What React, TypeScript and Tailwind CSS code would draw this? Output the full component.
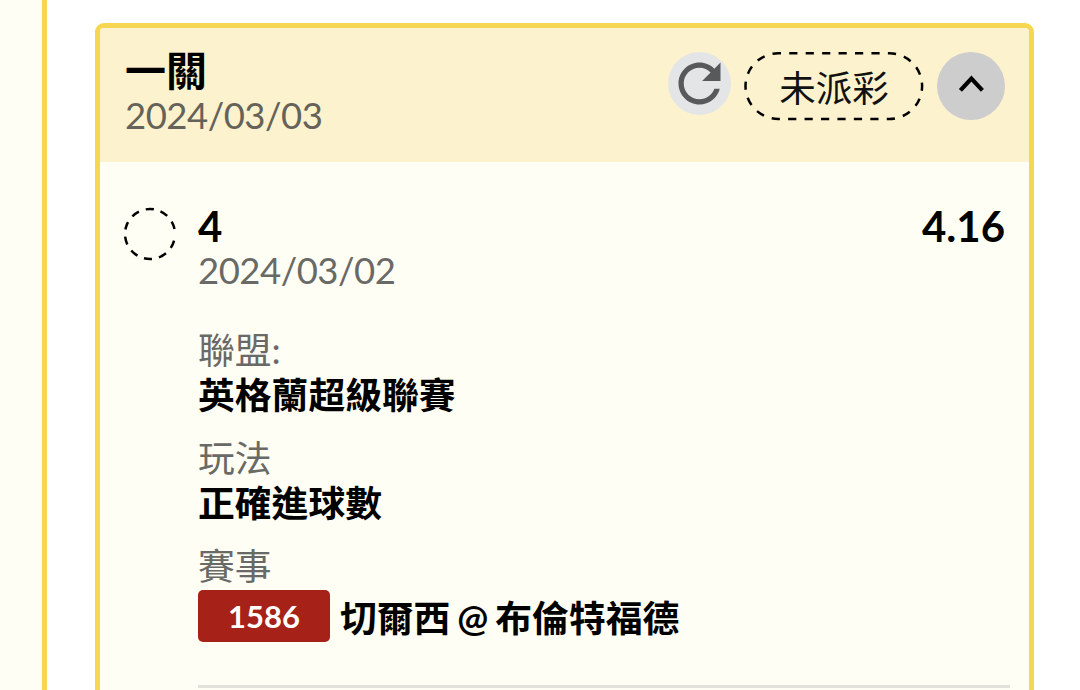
interface DetailItem {
  label: string
  value: string
}

const details: DetailItem[] = [
  { label: '聯盟:', value: '英格蘭超級聯賽' },
  { label: '玩法', value: '正確進球數' },
]

const RefreshButton = () => (
  <button type="button" aria-label="refresh" className="h-[63px] w-[63px] shrink-0 rounded-full bg-[#e4e5e7]">
    <svg viewBox="0 0 24 24" className="block h-[63px] w-[63px]" fill="#58595b">
      <path d="M17.65 6.35C16.2 4.9 14.21 4 12 4c-4.42 0-7.99 3.58-7.99 8s3.57 8 7.99 8c3.73 0 6.84-2.55 7.73-6h-2.08c-.82 2.33-3.04 4-5.65 4-3.31 0-6-2.69-6-6s2.69-6 6-6c1.66 0 3.14.69 4.22 1.78L13 11h7V4l-2.35 2.35z" />
    </svg>
  </button>
)

const StatusPill = ({ text }: { text: string }) => (
  <div className="relative ml-[13px] flex h-[68px] w-[180px] items-center justify-center text-[36.5px] leading-none text-[#111]">
    <svg viewBox="0 0 180 68" className="absolute inset-0 h-full w-full overflow-visible" fill="none" stroke="#000">
      <rect
        x="1.5"
        y="1.3"
        width="176.6"
        height="65.6"
        rx="32.8"
        strokeWidth="2.5"
        strokeDasharray="8.2 8.24"
        strokeDashoffset="5.5"
      />
    </svg>
    <span className="pt-[4px]">{text}</span>
  </div>
)

const CollapseButton = () => (
  <button type="button" aria-label="collapse" className="ml-[13px] h-[68px] w-[68px] shrink-0 rounded-full bg-[#cdcdcd]">
    <svg viewBox="0 0 68 68" className="block h-full w-full" fill="none" stroke="#000" strokeWidth="4.2">
      <path d="M23.4 38.4L34.4 26.6L45.4 38.4" />
    </svg>
  </button>
)

const PendingCircle = () => (
  <svg viewBox="0 0 54 54" className="mt-[18px] h-[54px] w-[54px] shrink-0" fill="none" stroke="#000">
    <circle
      cx="27"
      cy="27"
      r="25"
      strokeWidth="2.5"
      transform="rotate(15.5 27 27)"
      strokeDasharray="8 7.15 8 7.15 8 7.15 8 7.15 8 7.15 8 7.15 8 7.15 8 7.15 8 7.15 8 20"
    />
  </svg>
)

const App = () => {
  return (
    <div className="flex h-[690px] w-[1080px] overflow-hidden bg-white font-['Lato','Noto_Sans_CJK_TC',sans-serif] text-black">
      <div className="w-[47px] shrink-0 border-r-[5px] border-[#f7d751] bg-[#fffef5]" />

      <div className="ml-12 mt-[23px] h-[720px] w-[939px] shrink-0 overflow-hidden rounded-[9px] border-[5px] border-[#f7d751] bg-[#fffef5]">
        <header className="flex h-[134px] justify-between bg-[#fdf2ce] pl-[25px] pr-6 pt-6">
          <div className="-mt-[2px]">
            <h2 className="h-[43px] text-[41px] leading-[42px] font-bold">一關</h2>
            <p className="h-[44px] text-[36.5px] leading-[44px] tracking-[-0.5px] text-[#65625a]">2024/03/03</p>
          </div>
          <div className="flex items-start">
            <RefreshButton />
            <StatusPill text="未派彩" />
            <CollapseButton />
          </div>
        </header>

        <div className="flex pl-[23px] pt-[27px]">
          <PendingCircle />

          <div className="ml-[21px] w-[812px]">
            <div className="mt-[13px] flex h-[48px] justify-between pr-[5px] text-[42px] leading-[48px] font-bold">
              <span>4</span>
              <span>4.16</span>
            </div>
            <p className="h-[40px] text-[36.5px] leading-[40px] tracking-[-0.5px] text-[#696965]">2024/03/02</p>

            <div className="mt-[37px]">
              {details.map((item) => (
                <div key={item.label} className="mb-[16px] h-[92px] text-[36.8px]">
                  <div className="h-[45px] leading-[47px] text-[#696965]">{item.label}</div>
                  <div className="h-[46px] leading-[46px] font-bold">{item.value}</div>
                </div>
              ))}
              <div className="h-[47px] text-[36.8px] leading-[46px] text-[#696965]">賽事</div>
            </div>

            <div className="flex h-[52px] items-center">
              <span className="flex h-[52px] w-[132px] items-center justify-center rounded-[5px] bg-[#a62117] pt-px text-[31px] leading-none font-bold text-white">
                1586
              </span>
              <span className="ml-[10px] pt-[4px] text-[36.8px] leading-[52px] font-bold whitespace-nowrap [word-spacing:-2px]">
                切爾西 @ 布倫特福德
              </span>
            </div>

            <div className="mt-[43px] h-[3px] bg-[#e2e2db]" />
          </div>
        </div>
      </div>
    </div>
  )
}

export default App
